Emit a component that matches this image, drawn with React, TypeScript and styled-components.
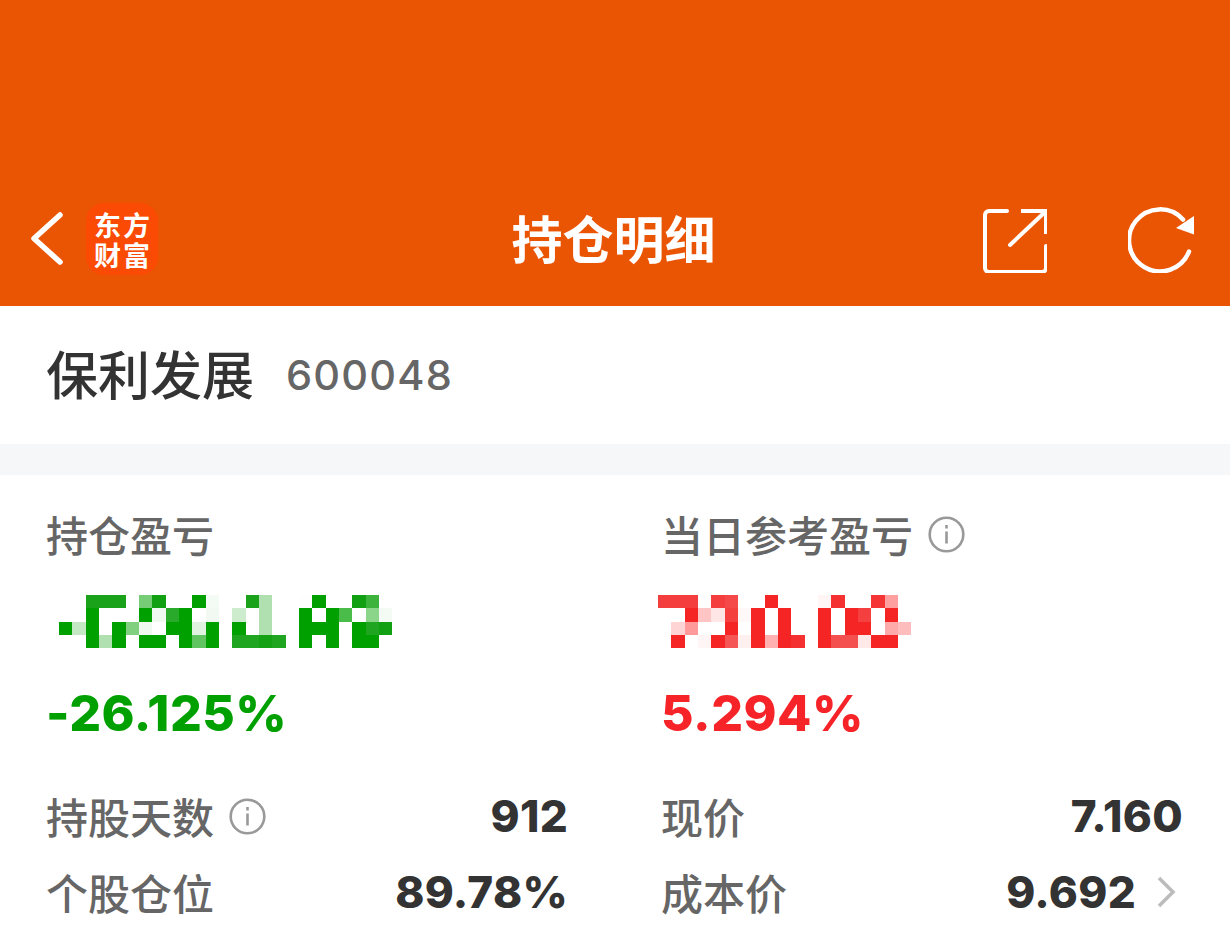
import React from 'react';
import styled, { createGlobalStyle } from 'styled-components';

const Global = createGlobalStyle`
  html, body { margin: 0; padding: 0; background: #fff; }
  body { font-family: "Inter", "Noto Sans CJK SC", sans-serif; width: 1230px; height: 932px; overflow: hidden; }
`;
const Page = styled.div`
  width: 1230px; height: 932px; overflow: hidden; display: flex; flex-direction: column; background: #fff;
`;
const Header = styled.header`
  height: 306px; flex: none; box-sizing: border-box; background: #ea5504; display: grid;
  grid-template-columns: 1fr auto 1fr; align-items: center; padding: 202px 36px 30px 30px; color: #fff;
`;
const HeaderLeft = styled.div`display: flex; align-items: center; gap: 23px;`;
const HeaderRight = styled.div`display: flex; align-items: center; justify-content: flex-end; gap: 81px; margin-top: 2px;`;
const Title = styled.h1`
  margin: 0 0 4px 3px; font: 700 51px/66px "Noto Sans CJK SC", sans-serif; color: #fff;
`;
const Logo = styled.div`
  width: 72px; height: 72px; border-radius: 18px; background: #fb4a03; color: #fff; display: grid;
  grid-template-columns: 1fr 1fr; place-items: center; padding: 6px 7px; box-sizing: border-box;
  font: 700 27px/29px "Noto Sans CJK SC", sans-serif;
`;
const StockBar = styled.section`
  height: 138px; flex: none; box-sizing: border-box; display: flex; align-items: center; gap: 32px; padding: 0 46px 4px;
`;
const StockName = styled.span`font: 500 52px/70px "Noto Sans CJK SC", sans-serif; color: #333;`;
const StockCode = styled.span`margin-top: 3px; font: 500 41.5px/50px "Inter", sans-serif; color: #666; letter-spacing: 1.2px;`;
const Divider = styled.div`height: 31px; flex: none; background: #f6f7f9;`;
const Columns = styled.main`
  display: grid; grid-template-columns: 521px 521px; column-gap: 94px; padding: 32px 46px 0 46px;
`;
const Column = styled.div`display: flex; flex-direction: column;`;
const Label = styled.div`
  display: flex; align-items: center; gap: 15px; font: 500 42px/54px "Noto Sans CJK SC", sans-serif; color: #666;
`;
const Mosaic = styled.svg`display: block; filter: blur(0.4px);`;
const MosaicSlot = styled.div<{ $offset: number }>`margin: 34px 0 0 ${p => p.$offset}px;`;
const Percent = styled.div<{ $color: string }>`
  margin-top: 36px; font: 800 50px/56px "Inter", sans-serif; color: ${p => p.$color}; letter-spacing: .5px;
`;
const Stats = styled.div`margin-top: 48px; display: flex; flex-direction: column; gap: 22px;`;
const Stat = styled.div`display: flex; justify-content: space-between; align-items: center; height: 54px;`;
const Value = styled.span`
  display: flex; align-items: center; gap: 20px; margin-right: -1px;
  font: 800 44px/54px "Inter", sans-serif; color: #333; letter-spacing: .3px;
`;
const Chevron = styled.svg`margin-right: 7px; flex: none;`;

type Cell = [number, number, string];
const step = 40 / 3;
const MosaicImage = ({ cells, width }: { cells: Cell[]; width: number }) => (
  <Mosaic width={width} height={54} viewBox={`0 0 ${width} 54`}>
    {cells.map(([r, c, color], i) => {
      const x = Math.round(c * step);
      const y = Math.round(r * step);
      return (
        <rect key={i} x={x} y={y} width={Math.round((c + 1) * step) - x} height={Math.round((r + 1) * step) - y} fill={color} />
      );
    })}
  </Mosaic>
);

const G = '#00a000', D = '#1aa31a', L = '#b0e0b0';
const green: Cell[] = [
  [0,2,D],[0,3,D],[0,4,D],[0,6,'#77cc77'],[0,7,'#11a011'],[0,10,G],[0,11,'#f4fbf4'],[0,14,D],[0,15,L],[0,18,'#fdfefd'],[0,19,G],[0,22,'#11a011'],[0,23,'#3cb43c'],
  [1,2,G],[1,6,G],[1,7,'#f0f9f0'],[1,8,'#2aaa2a'],[1,9,G],[1,11,'#f2f9f2'],[1,13,'#cdebcd'],[1,15,L],[1,18,G],[1,20,G],[1,21,'#4abc4a'],[1,23,'#8ad58a'],[1,24,'#f4fbf4'],
  [2,0,G],[2,1,'#c4e8c4'],[2,2,G],[2,4,G],[2,5,'#80d080'],[2,6,'#f0f9f0'],[2,8,G],[2,9,G],[2,10,'#e0f3e0'],[2,11,G],[2,13,G],[2,15,L],[2,18,G],[2,19,G],[2,20,G],[2,22,G],[2,23,'#20a520'],[2,24,'#11a011'],
  [3,2,G],[3,3,L],[3,4,G],[3,6,G],[3,7,G],[3,9,G],[3,10,'#60c460'],[3,11,G],[3,13,'#20a520'],[3,14,'#20a520'],[3,15,'#14a114'],[3,16,'#20a520'],[3,18,G],[3,20,G],[3,22,G],[3,23,G],
];
const R = '#f52525', O = '#f43d3d';
const red: Cell[] = [
  [0,0,O],[0,1,O],[0,2,O],[0,4,O],[0,5,'#f54848'],[0,8,R],[0,12,'#fff5f5'],[0,13,'#f53030'],[0,16,'#f53535'],[0,17,'#ffa0a0'],
  [1,2,R],[1,3,'#ffc4c4'],[1,4,'#ffe6e6'],[1,5,'#f54040'],[1,6,'#fff8f8'],[1,7,R],[1,9,R],[1,12,R],[1,14,R],[1,15,'#f54040'],[1,17,R],
  [2,1,'#ffd4d4'],[2,2,'#ff9a9a'],[2,5,R],[2,7,R],[2,9,R],[2,12,R],[2,14,R],[2,15,R],[2,17,'#ffaaaa'],[2,18,'#ffbcbc'],
  [3,1,R],[3,3,'#fff5f5'],[3,4,R],[3,5,'#f55555'],[3,6,'#fff0f0'],[3,7,R],[3,8,'#ffb0b0'],[3,9,R],[3,10,'#f53030'],[3,12,R],[3,13,'#f55050'],[3,14,'#f55050'],[3,15,'#ffe8e8'],[3,16,R],[3,17,R],
];

const InfoIcon = () => (
  <svg width="37" height="37" viewBox="0 0 37 37" fill="none" stroke="#999" strokeWidth="2.6">
    <circle cx="18.500" cy="18.500" r="16.800" />
    <path d="M18.500 15.500v12M18.500 9v3.500" strokeWidth="2.600" />
  </svg>
);

export default function App() {
  return (
    <Page>
      <Global />
      <Header>
        <HeaderLeft>
          <svg width="33" height="54" viewBox="0 0 33 54" fill="none" stroke="#fff" strokeWidth="5.500" strokeLinecap="round" strokeLinejoin="round">
            <path d="M30 3 4 26.500 30 50" />
          </svg>
          <Logo><span>东</span><span>方</span><span>财</span><span>富</span></Logo>
        </HeaderLeft>
        <Title>持仓明细</Title>
        <HeaderRight>
          <svg width="66" height="66" viewBox="0 0 66 66" fill="none" stroke="#fff" strokeWidth="4" strokeLinecap="round">
            <path d="M26 4H8a4 4 0 0 0-4 4v53a4 4 0 0 0 4 4h53a4 4 0 0 0 4-4V39" />
            <path d="M40 4h25v23" strokeLinecap="butt" />
            <path d="M64 5 29 38" />
          </svg>
          <svg width="66" height="66" viewBox="0 0 66 66" fill="none">
            <path d="M61 44.500A31 31 0 1 1 55 12.500" stroke="#fff" strokeWidth="4.500" strokeLinecap="round" />
            <path d="M66 9v18.500L48 21z" fill="#fff" />
          </svg>
        </HeaderRight>
      </Header>
      <StockBar>
        <StockName>保利发展</StockName>
        <StockCode>600048</StockCode>
      </StockBar>
      <Divider />
      <Columns>
        <Column>
          <Label>持仓盈亏</Label>
          <MosaicSlot $offset={13}><MosaicImage cells={green} width={334} /></MosaicSlot>
          <Percent $color="#00a000">-26.125%</Percent>
          <Stats>
            <Stat><Label>持股天数<InfoIcon /></Label><Value>912</Value></Stat>
            <Stat><Label>个股仓位</Label><Value>89.78%</Value></Stat>
          </Stats>
        </Column>
        <Column>
          <Label>当日参考盈亏<InfoIcon /></Label>
          <MosaicSlot $offset={-3}><MosaicImage cells={red} width={254} /></MosaicSlot>
          <Percent $color="#f62428">5.294%</Percent>
          <Stats>
            <Stat><Label>现价</Label><Value>7.160</Value></Stat>
            <Stat>
              <Label>成本价</Label>
              <Value>9.692
                <Chevron width="20" height="32" viewBox="0 0 20 32" fill="none" stroke="#bbb" strokeWidth="3.500">
                  <path d="M3 2l14 14L3 30" />
                </Chevron>
              </Value>
            </Stat>
          </Stats>
        </Column>
      </Columns>
    </Page>
  );
}
